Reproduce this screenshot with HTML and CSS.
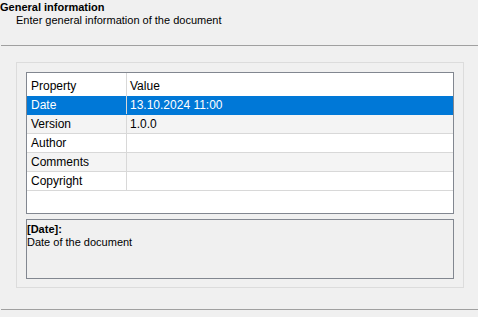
FILE: index.html
```html
<!DOCTYPE html>
<html lang="en">
<head>
  <meta charset="UTF-8" />
  <title>General information</title>
  <link rel="stylesheet" href="styles.css">
</head>
<body>

  <!-- header -->
  <div class="page-head">
    <div class="head-title">General information</div>
    <div class="head-sub">Enter general information of the document</div>
  </div>

  <div class="panel">
    <div class="grid">
      <div class="row head">
        <div class="cell name">Property</div>
        <div class="cell value">Value</div>
      </div>
      <div class="row selected">
        <div class="cell name">Date</div>
        <div class="cell value">13.10.2024 11:00</div>
      </div>
      <div class="row alt">
        <div class="cell name">Version</div>
        <div class="cell value">1.0.0</div>
      </div>
      <div class="row">
        <div class="cell name">Author</div>
        <div class="cell value"></div>
      </div>
      <div class="row alt">
        <div class="cell name">Comments</div>
        <div class="cell value"></div>
      </div>
      <div class="row">
        <div class="cell name">Copyright</div>
        <div class="cell value"></div>
      </div>
    </div>

    <div class="desc">
      <div class="desc-title">[Date]:</div>
      <div class="desc-text">Date of the document</div>
    </div>
  </div>

  <div class="page-foot"></div>

</body>
</html>
```

FILE: styles.css
```css
body {
  margin: 0;
  background: #f0f0f0;
  font-family: "Liberation Sans", Arial, sans-serif;
  font-size: 11px;
  color: #000;
  height: 317px;
  overflow: hidden;
}

.page-head {
  height: 46px;
  margin-left: 1px;
  border-bottom: 1px solid #a0a0a0;
  box-sizing: border-box;
  padding-top: 1px;
}

.head-title {
  font-weight: bold;
  line-height: 13px;
  margin-left: -1px;
}

.head-sub {
  padding-left: 15px;
  line-height: 13px;
}

.panel {
  margin: 16px 14px 0 16px;
  height: 226px;
  box-sizing: border-box;
  border: 1px solid #dcdcdc;
  padding: 9px 9px 8px 9px;
  display: flex;
  flex-direction: column;
  gap: 5px;
}

.grid {
  height: 142px;
  box-sizing: border-box;
  border: 1px solid #828790;
  background: #fff;
  font-size: 12px;
}

.row {
  display: flex;
  height: 19px;
  box-sizing: border-box;
  border-bottom: 1px solid #d8d8d8;
  line-height: 17px;
}

.row.head {
  height: 23px;
  line-height: 20px;
  border-bottom: none;
}

.row.alt { background: #f4f4f4; }

.row.selected {
  background: #0078d7;
  color: #fff;
  border-bottom-color: #0078d7;
}

.cell {
  padding: 1px 0 0 4px;
  white-space: nowrap;
}

.row.head .cell { padding-top: 3px; }

.cell.name {
  width: 95px;
  border-right: 1px solid #d8d8d8;
}

.cell.value { flex: 1; padding-left: 3px; }

.desc {
  height: 60px;
  box-sizing: border-box;
  border: 1px solid #828790;
  padding: 3px 0 0 0;
  line-height: 13px;
}

.desc-title { font-weight: bold; }

.page-foot {
  margin: 21px 0 0 1px;
  border-top: 1px solid #a0a0a0;
}
```
